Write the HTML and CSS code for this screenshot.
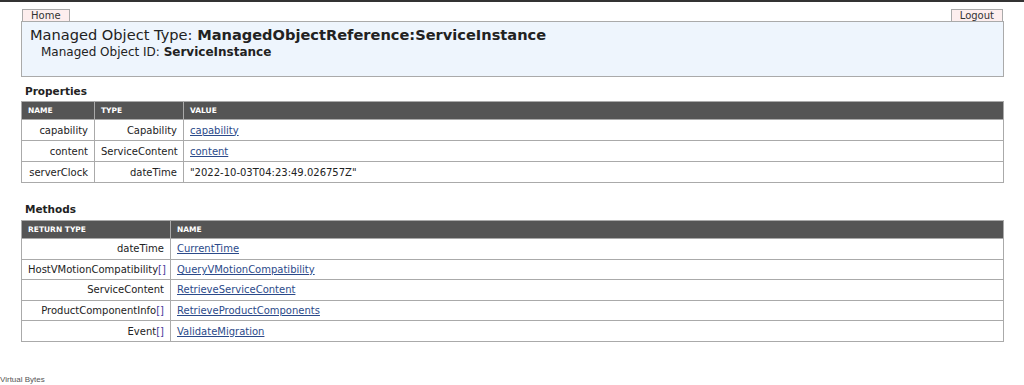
FILE: index.html
```html
<!DOCTYPE html>
<html>
	<head>
		<meta charset="UTF-8">
		<title>Managed Object Browser</title>
		<link rel="stylesheet" href="styles.css">
	</head>
	<body>
		<div class="topbar"></div>
		<div class="page">
			<div class="tabs">
				<a class="tab" href="#">Home</a>
				<a class="tab" href="#">Logout</a>
			</div>
			<div class="header">
				<div class="type">Managed Object Type: <b>ManagedObjectReference:ServiceInstance</b></div>
				<div class="moid">Managed Object ID: <b>ServiceInstance</b></div>
			</div>

			<h3>Properties</h3>
			<table class="grid props">
				<tr>
					<th class="c-name">NAME</th>
					<th class="c-type">TYPE</th>
					<th>VALUE</th>
				</tr>
				<tr>
					<td class="r">capability</td>
					<td class="r">Capability</td>
					<td><a href="#">capability</a></td>
				</tr>
				<tr>
					<td class="r">content</td>
					<td class="r">ServiceContent</td>
					<td><a href="#">content</a></td>
				</tr>
				<tr>
					<td class="r">serverClock</td>
					<td class="r">dateTime</td>
					<td>"2022-10-03T04:23:49.026757Z"</td>
				</tr>
			</table>

			<h3 class="methods-title">Methods</h3>
			<table class="grid methods">
				<tr>
					<th class="c-ret">RETURN TYPE</th>
					<th>NAME</th>
				</tr>
				<tr>
					<td class="r">dateTime</td>
					<td><a href="#">CurrentTime</a></td>
				</tr>
				<tr>
					<td class="r">HostVMotionCompatibility<span class="arr">[]</span></td>
					<td><a href="#">QueryVMotionCompatibility</a></td>
				</tr>
				<tr>
					<td class="r">ServiceContent</td>
					<td><a href="#">RetrieveServiceContent</a></td>
				</tr>
				<tr>
					<td class="r">ProductComponentInfo<span class="arr">[]</span></td>
					<td><a href="#">RetrieveProductComponents</a></td>
				</tr>
				<tr>
					<td class="r">Event<span class="arr">[]</span></td>
					<td><a href="#">ValidateMigration</a></td>
				</tr>
			</table>
		</div>
		<div class="footer">Virtual Bytes</div>
	</body>
</html>
```

FILE: styles.css
```css
*{
	padding: 0;
	margin: 0;
}
body{
	background: #fff;
	font-family: "DejaVu Sans", Verdana, sans-serif;
	font-size: 10px;
	color: #222;
	height: 385px;
	position: relative;
}
.topbar{
	height: 2px;
	background: #333;
}
.page{
	width: 983px;
	margin: 0 0 0 21px;
}
.tabs{
	display: flex;
	justify-content: space-between;
	padding: 7px 1px 0 1px;
}
.tab{
	display: block;
	background: #fdeeee;
	border: 1px solid #aaa;
	border-bottom: none;
	color: #333;
	text-decoration: none;
	font-size: 10px;
	line-height: 11px;
	padding: 0 8px;
}
.header{
	background: #eef5fd;
	border: 1px solid #aaa;
	height: 54px;
	padding: 0 0 0 8px;
}
.type{
	font-size: 14.6px;
	margin-top: 3px;
	line-height: 20px;
}
.moid{
	font-size: 12px;
	line-height: 14px;
	padding-left: 11px;
}
h3{
	font-size: 10.5px;
	font-weight: bold;
	margin: 7px 0 0 4px;
	line-height: 15px;
}
.methods-title{
	margin-top: 19px;
}
.grid{
	border-collapse: collapse;
	table-layout: fixed;
	width: 983px;
	border: 1px solid #aaa;
	margin-top: 2px;
}
.methods{
	margin-top: 3px;
}
.grid th{
	background: #555;
	color: #fff;
	font-size: 7.5px;
	font-weight: bold;
	text-align: left;
	height: 17px;
	padding: 0 6px;
	border: 1px solid #aaa;
	border-top: none;
}
.grid td{
	height: 20px;
	padding: 0 6px;
	border: 1px solid #aaa;
	white-space: nowrap;
}
.methods td{
	height: 19.6px;
}
.grid td.r{
	text-align: right;
}
.c-name{
	width: 60px;
}
.c-type{
	width: 76px;
}
.c-ret{
	width: 136px;
}
.grid a{
	color: #2b4a8a;
}
.arr{
	color: #4a3b9c;
}
.footer{
	position: absolute;
	left: 0;
	top: 375px;
	font-family: "Liberation Sans", Arial, sans-serif;
	font-size: 8px;
	color: #555;
}
```
